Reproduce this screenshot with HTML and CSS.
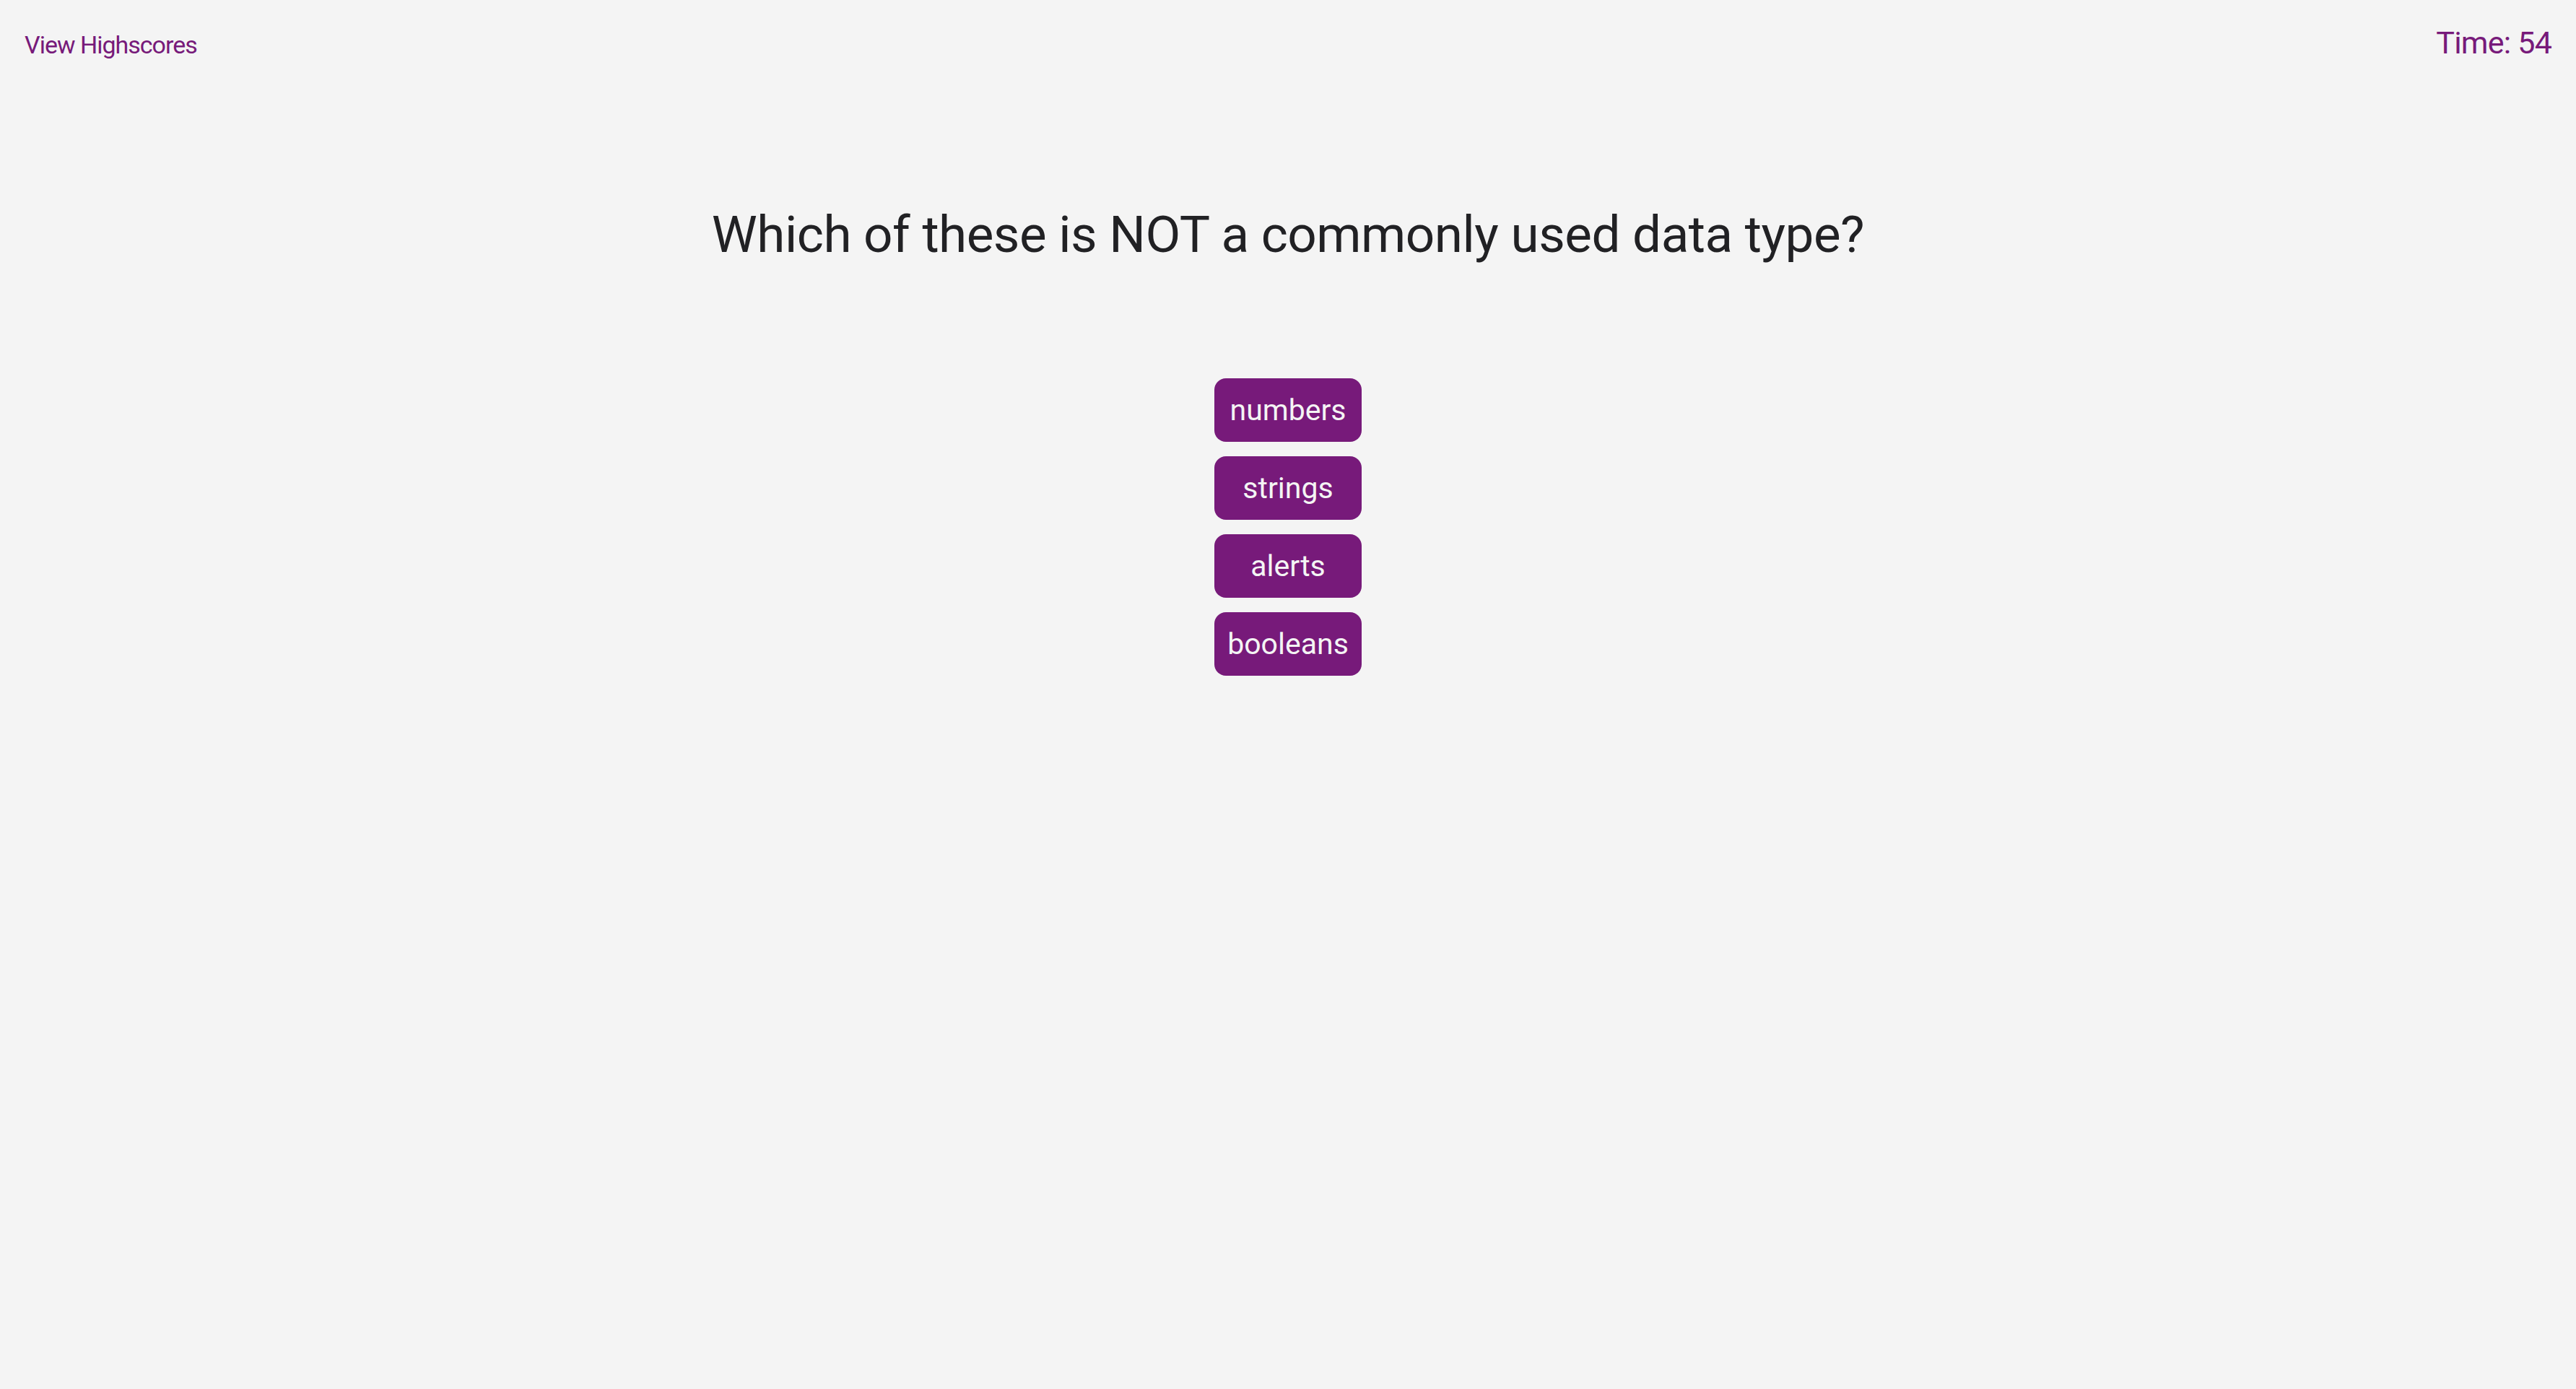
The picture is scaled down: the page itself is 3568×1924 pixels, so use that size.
FILE: index.html
```html
<!DOCTYPE html>
<html lang="en">
<head>
<meta charset="utf-8">
<title>Quiz</title>
<link rel="stylesheet" href="styles.css">
</head>
<body>
<header class="topbar">
  <a class="highscores" href="#">View Highscores</a>
  <div class="timer">Time: 54</div>
</header>
<main class="quiz">
  <h1 class="question">Which of these is NOT a commonly used data type?</h1>
  <div class="choices">
    <button class="choice">numbers</button>
    <button class="choice">strings</button>
    <button class="choice">alerts</button>
    <button class="choice">booleans</button>
  </div>
</main>
</body>
</html>
```

FILE: styles.css
```css
html, body {
  margin: 0;
  padding: 0;
  background: #f4f4f4;
  font-family: "Roboto", "Liberation Sans", sans-serif;
}
.topbar {
  display: flex;
  justify-content: space-between;
  align-items: baseline;
  padding: 34px 34px 0 34px;
}
.highscores {
  color: #771a7a;
  text-decoration: none;
  font-size: 34px;
  letter-spacing: -1px;
}
.timer {
  color: #771a7a;
  font-size: 43px;
  letter-spacing: -0.8px;
}
.quiz {
  display: flex;
  flex-direction: column;
  align-items: center;
}
.question {
  margin: 198px 0 0 0;
  font-size: 71px;
  font-weight: 400;
  color: #212124;
  line-height: 1.2;
  letter-spacing: -0.5px;
}
.choices {
  display: flex;
  flex-direction: column;
  align-items: center;
  gap: 20px;
  margin-top: 157px;
}
.choice {
  width: 204px;
  height: 88px;
  border: none;
  border-radius: 16px;
  background: #771a7a;
  color: #f4f4f4;
  font-family: inherit;
  font-size: 41px;
  padding: 0;
}
```
